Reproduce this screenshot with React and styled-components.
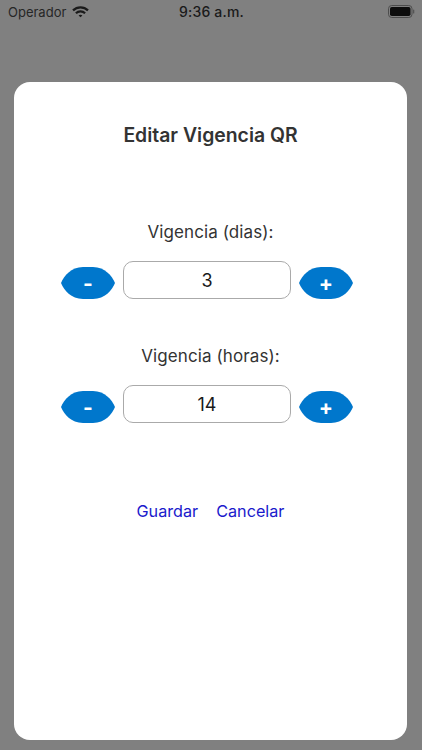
import React from "react";
import styled, { createGlobalStyle } from "styled-components";

const Global = createGlobalStyle`
  html, body { margin: 0; padding: 0; background: #808080; }
  body { font-family: Inter, "Liberation Sans", sans-serif; }
`;
const Screen = styled.div`
  width: 422px; height: 750px; background: #808080; display: flex; flex-direction: column; overflow: hidden;
`;
const StatusBar = styled.div`
  height: 23px; padding: 0 7px 0 8px; display: grid; grid-template-columns: 1fr auto 1fr; align-items: center;
  color: #262626;
`;
const Carrier = styled.div`display: flex; align-items: center; gap: 6px; font-size: 13px;`;
const Time = styled.div`font-size: 14px; font-weight: 500; letter-spacing: 0.2px; color: #1a1a1a;`;
const BatteryWrap = styled.div`display: flex; justify-content: flex-end; align-items: center;`;
const Card = styled.div`
  margin: 59px 15px 10px 14px; flex: 1; background: #fff; border-radius: 16px;
  display: flex; flex-direction: column; align-items: center; padding-top: 41px;
`;
const Title = styled.h1`
  margin: 0 0 74px; font-size: 19.4px; line-height: 24px; font-weight: 600; color: #333;
`;
const Label = styled.div`
  font-size: 17px; line-height: 22px; color: #333; margin-bottom: 18px; letter-spacing: 0.1px;
`;
const Stepper = styled.div`
  display: flex; align-items: flex-end; gap: 8px; margin-right: 7px; margin-bottom: ${p => p.$mb}px;
`;
const StepBtn = styled.button`
  width: 54px; height: 32px; padding: 0; border: 0; background: #0077cc; color: #fff;
  font-family: inherit; font-size: 21px; font-weight: 700; line-height: 34px; text-align: center;
  clip-path: path("M0,16 C3,9 10,0 22,0 L32,0 C44,0 51,9 54,16 C51,23 44,32 32,32 L22,32 C10,32 3,23 0,16Z");
`;
const Value = styled.div`
  box-sizing: border-box; width: 168px; height: 38px; border: 1px solid #aaa; border-radius: 10px;
  display: flex; align-items: center; justify-content: center; font-size: 18px; color: #1a1a1a;
`;
const Actions = styled.div`display: flex; gap: 18px;`;
const Action = styled.button`
  border: 0; padding: 0; background: none; font-family: inherit; font-size: 16.2px; line-height: 22px; color: #1a1acc;
`;

const Wifi = () => (
  <svg width="17" height="12" viewBox="0 0 17 12" fill="none" stroke="#1a1a1a" strokeWidth="2.2">
    <path d="M1 4.4 C5.2 0.3 11.8 0.3 16 4.4" />
    <path d="M3.9 7.2 C6.5 4.8 10.5 4.8 13.1 7.2" />
    <path d="M6.6 9.6 L8.5 11.3 L10.4 9.6 C9.3 8.6 7.7 8.6 6.6 9.6Z" fill="#1a1a1a" stroke="none" />
  </svg>
);
const Battery = () => (
  <svg width="27" height="13" viewBox="0 0 27 13">
    <rect x="0.5" y="0.5" width="23.5" height="12" rx="3.2" fill="none" stroke="#4d4d4d" />
    <rect x="2" y="2" width="20.5" height="9" rx="1.8" fill="#0d0d0d" />
    <rect x="25" y="4.5" width="1.3" height="4" rx="0.6" fill="#555" />
  </svg>
);

const Row = ({ value, mb }) => (
  <Stepper $mb={mb}>
    <StepBtn>-</StepBtn>
    <Value>{value}</Value>
    <StepBtn>+</StepBtn>
  </Stepper>
);

export default function App() {
  return (
    <Screen>
      <Global />
      <StatusBar>
        <Carrier>Operador <Wifi /></Carrier>
        <Time>9:36 a.m.</Time>
        <BatteryWrap><Battery /></BatteryWrap>
      </StatusBar>
      <Card>
        <Title>Editar Vigencia QR</Title>
        <Label>Vigencia (dias):</Label>
        <Row value="3" mb={46} />
        <Label>Vigencia (horas):</Label>
        <Row value="14" mb={77} />
        <Actions>
          <Action>Guardar</Action>
          <Action>Cancelar</Action>
        </Actions>
      </Card>
    </Screen>
  );
}
